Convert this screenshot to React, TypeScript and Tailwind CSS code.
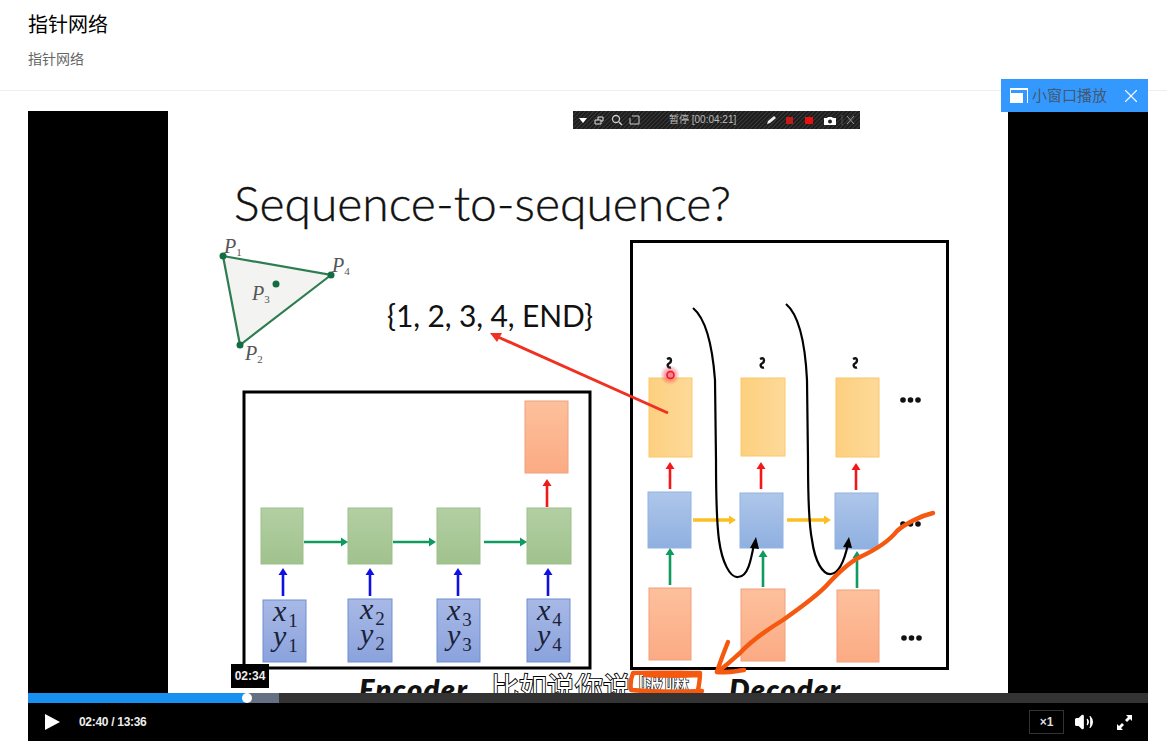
import { Volume2, X } from 'lucide-react';

const CJK = "'Liberation Sans', 'Noto Sans CJK SC', sans-serif";
const SLIDE = "Lato, 'Open Sans', sans-serif";

type Box = [number, number, number, number];

const greens: Box[] = [[261, 508, 42, 56], [348, 508, 44, 56], [437, 508, 43, 56], [527, 508, 44, 56]];
const inputs: Box[] = [[263, 600, 43, 62], [348, 599, 44, 63], [437, 599, 43, 63], [527, 599, 43, 63]];
const yellows: Box[] = [[649, 378, 43, 79], [741, 378, 44, 78], [836, 378, 43, 79]];
const blues: Box[] = [[648, 492, 43, 56], [740, 493, 43, 55], [835, 493, 43, 56]];
const oranges: Box[] = [[525, 401, 43, 72], [649, 588, 42, 72], [741, 589, 44, 72], [837, 590, 42, 72]];

// x1, y1, x2, y2, colour, stroke
const arrows: [number, number, number, number, string, number][] = [
  [283, 596, 283, 568, '#1010e0', 2.6],
  [370, 596, 370, 568, '#1010e0', 2.6],
  [458, 596, 458, 568, '#1010e0', 2.6],
  [548, 596, 548, 568, '#1010e0', 2.6],
  [304, 542, 348, 542, '#109a60', 2.6],
  [393, 542, 436, 542, '#109a60', 2.6],
  [484, 542, 527, 542, '#109a60', 2.6],
  [547, 507, 547, 479, '#f01818', 2.6],
  [670, 489, 670, 462, '#f01818', 2.6],
  [761, 489, 761, 462, '#f01818', 2.6],
  [856, 490, 856, 463, '#f01818', 2.6],
  [693, 520, 736, 520, '#fbbf24', 3.4],
  [787, 520, 831, 520, '#fbbf24', 3.4],
  [670, 585, 670, 548, '#109a60', 2.6],
  [763, 587, 763, 550, '#109a60', 2.6],
  [857, 588, 857, 551, '#109a60', 2.6],
];

function Boxes({ items, fill, stroke }: { items: Box[]; fill: string; stroke: string }) {
  return (
    <>
      {items.map(([x, y, w, h]) => (
        <rect key={`${x}-${y}`} x={x} y={y} width={w} height={h} fill={fill} stroke={stroke} strokeWidth="1" />
      ))}
    </>
  );
}

function Arrow({ x1, y1, x2, y2, color, width }: { x1: number; y1: number; x2: number; y2: number; color: string; width: number }) {
  const len = Math.hypot(x2 - x1, y2 - y1);
  const ux = (x2 - x1) / len;
  const uy = (y2 - y1) / len;
  const bx = x2 - ux * 7;
  const by = y2 - uy * 7;
  return (
    <g>
      <line x1={x1} y1={y1} x2={bx} y2={by} stroke={color} strokeWidth={width} />
      <polygon points={`${x2},${y2} ${bx - uy * 4.5},${by + ux * 4.5} ${bx + uy * 4.5},${by - ux * 4.5}`} fill={color} />
    </g>
  );
}

function Dots({ x, y }: { x: number; y: number }) {
  return (
    <>
      <circle cx={x} cy={y} r="2.8" fill="#111" />
      <circle cx={x + 7.5} cy={y} r="2.8" fill="#111" />
      <circle cx={x + 15} cy={y} r="2.8" fill="#111" />
    </>
  );
}

function Squiggle({ x }: { x: number }) {
  return (
    <path
      d={`M${x - 2} 359 q4 -2 4 1.5 q0 2 -2 3 q-2 1 -1 3 q1 1.5 3 1`}
      fill="none"
      stroke="#111"
      strokeWidth="2.4"
    />
  );
}

function Vars({ x, n, top }: { x: number; n: number; top: number }) {
  return (
    <g fill="#1a2238" fontFamily="'Liberation Serif', serif" fontSize="30">
      <text x={x} y={top}>
        <tspan fontStyle="italic">x</tspan>
        <tspan dy="6" dx="2" fontSize="19">{n}</tspan>
      </text>
      <text x={x} y={top + 25}>
        <tspan fontStyle="italic">y</tspan>
        <tspan dy="6" dx="2" fontSize="19">{n}</tspan>
      </text>
    </g>
  );
}

function PLabel({ x, y, n }: { x: number; y: number; n: number }) {
  return (
    <text x={x} y={y} fill="#555" fontFamily="'Liberation Serif', serif" fontSize="20">
      <tspan fontStyle="italic">P</tspan>
      <tspan dy="3" fontSize="11">{n}</tspan>
    </text>
  );
}

function Slide() {
  return (
    <svg className="block w-[840px] h-[582px] bg-white" viewBox="168 111 840 582">
      <defs>
        <pattern id="hatch" width="3" height="3" patternUnits="userSpaceOnUse" patternTransform="rotate(45)">
          <rect width="3" height="3" fill="#1c1c1c" />
          <rect width="1" height="3" fill="#3a3a3a" />
        </pattern>
        <linearGradient id="yellowFill" x1="0" x2="1" y1="0" y2="0">
          <stop offset="0" stopColor="#fdd07f" />
          <stop offset="1" stopColor="#fdd999" />
        </linearGradient>
        <linearGradient id="blueFill" x1="0" x2="0" y1="0" y2="1">
          <stop offset="0" stopColor="#aec6ea" />
          <stop offset="1" stopColor="#8fb0e0" />
        </linearGradient>
        <linearGradient id="orangeFill" x1="0" x2="0" y1="0" y2="1">
          <stop offset="0" stopColor="#fdc09c" />
          <stop offset="1" stopColor="#fbab84" />
        </linearGradient>
        <linearGradient id="greenFill" x1="0" x2="0" y1="0" y2="1">
          <stop offset="0" stopColor="#b3cfa3" />
          <stop offset="1" stopColor="#a0c28d" />
        </linearGradient>
        <linearGradient id="inputFill" x1="0" x2="0" y1="0" y2="1">
          <stop offset="0" stopColor="#a8b9e6" />
          <stop offset="1" stopColor="#8aa2dc" />
        </linearGradient>
        <radialGradient id="glow">
          <stop offset="0.3" stopColor="#f04050" stopOpacity="0.65" />
          <stop offset="1" stopColor="#f04050" stopOpacity="0" />
        </radialGradient>
      </defs>

      {/* screen recorder toolbar */}
      <rect x="573" y="111" width="287" height="18" fill="url(#hatch)" />
      <polygon points="579,118 587,118 583,123" fill="#fff" />
      <path d="M595 120h6v4h-6z M598 120v-3h5v4h-2" fill="none" stroke="#ddd" strokeWidth="1" />
      <circle cx="616" cy="119" r="3.5" fill="none" stroke="#ccc" strokeWidth="1.3" />
      <line x1="619" y1="122" x2="622" y2="125" stroke="#ccc" strokeWidth="1.5" />
      <path d="M630 118v6h9v-8h-7" fill="none" stroke="#ccc" strokeWidth="1" />
      <text x="669" y="123" fontSize="10" fill="#bbb" fontFamily={CJK}>暂停 [00:04:21]</text>
      <path d="M767 124l1-3 6-5 2 2-6 5z" fill="#eee" />
      <rect x="786" y="117" width="7" height="7" fill="#c81818" />
      <rect x="805" y="117" width="8" height="7" fill="#e81010" />
      <path d="M824 118h3l1-1h4l1 1h3v7h-12z" fill="#fff" />
      <circle cx="830" cy="121.5" r="2" fill="#222" />
      <line x1="842" y1="115" x2="842" y2="125" stroke="#555" />
      <path d="M847 116l7 8M854 116l-7 8" stroke="#999" strokeWidth="1" />

      {/* title */}
      <text
        x="234"
        y="221"
        fontSize="48"
        fontWeight="300"
        fill="#111"
        stroke="#111"
        strokeWidth="0.4"
        fontFamily={SLIDE}
        textLength="497"
      >
        Sequence-to-sequence?
      </text>

      {/* point triangle */}
      <polygon points="223,256 331,275 240,345" fill="#f3f4f1" stroke="#2e7d50" strokeWidth="2.2" />
      <circle cx="223" cy="256" r="3.5" fill="#146c43" />
      <circle cx="331" cy="275" r="3.5" fill="#146c43" />
      <circle cx="240" cy="345" r="3.5" fill="#146c43" />
      <circle cx="276" cy="284" r="3.5" fill="#146c43" />
      <PLabel x={224} y={253} n={1} />
      <PLabel x={332} y={272} n={4} />
      <PLabel x={252} y={300} n={3} />
      <PLabel x={245} y={360} n={2} />

      <text x="387" y="327" fontSize="30" fill="#111" fontFamily={SLIDE} textLength="206">
        {'{1, 2, 3, 4, END}'}
      </text>

      {/* encoder */}
      <rect x="244" y="392" width="346" height="276" fill="#fff" stroke="#000" strokeWidth="3" />
      <Boxes items={greens} fill="url(#greenFill)" stroke="#9dbf8b" />
      <Boxes items={inputs} fill="url(#inputFill)" stroke="#6f8fd0" />
      <Vars x={273} n={1} top={621} />
      <Vars x={360} n={2} top={619} />
      <Vars x={447} n={3} top={620} />
      <Vars x={537} n={4} top={620} />

      {/* decoder */}
      <rect x="631.5" y="241.5" width="316" height="427" fill="#fff" stroke="#000" strokeWidth="3" />
      <Boxes items={yellows} fill="url(#yellowFill)" stroke="#fbc868" />
      <Boxes items={blues} fill="url(#blueFill)" stroke="#8fb4e4" />
      <Boxes items={oranges} fill="url(#orangeFill)" stroke="#f0a07c" />
      <Squiggle x={669} />
      <Squiggle x={762} />
      <Squiggle x={855} />
      <Dots x={903} y={400} />
      <Dots x={903} y={524} />
      <Dots x={904} y={638} />

      {arrows.map(([x1, y1, x2, y2, color, width]) => (
        <Arrow key={`${x1}-${y1}-${x2}`} x1={x1} y1={y1} x2={x2} y2={y2} color={color} width={width} />
      ))}

      {/* black curves */}
      <path
        d="M693 308C705 318 712 340 715 380L716 460C716 500 717 525 719 540C722 562 730 578 738 577C748 577 751 560 754 544"
        fill="none"
        stroke="#000"
        strokeWidth="2.2"
      />
      <polygon points="756,537 750,548 759,549" fill="#000" />
      <path
        d="M786 304C798 314 805 340 807 380L808 460C808 500 809 525 812 540C815 562 823 575 831 574C840 573 845 558 848 544"
        fill="none"
        stroke="#000"
        strokeWidth="2.2"
      />
      <polygon points="849,537 843,547 852,548" fill="#000" />

      {/* pointer arrow */}
      <line x1="668" y1="413" x2="498" y2="337" stroke="#f03020" strokeWidth="3" />
      <polygon points="490,333 502,333 497,342" fill="#f03020" />
      <circle cx="670" cy="375" r="10" fill="url(#glow)" />
      <circle cx="670.5" cy="375" r="3.5" fill="none" stroke="#f01828" strokeWidth="1.6" />

      {/* captions */}
      <text x="359" y="700" fontSize="29" fontWeight="800" fontStyle="italic" fill="#111" fontFamily={SLIDE} textLength="108">
        Encoder
      </text>
      <text x="729" y="700" fontSize="29" fontWeight="800" fontStyle="italic" fill="#111" fontFamily={SLIDE} textLength="111">
        Decoder
      </text>
      <text
        x="491"
        y="698"
        fontSize="28"
        fill="#fff"
        stroke="#000"
        strokeWidth="1.8"
        paintOrder="stroke"
        fontFamily="'Noto Sans CJK SC', sans-serif"
      >
        比如说你说
      </text>
      <text
        x="638"
        y="694"
        fontSize="26"
        fill="#fff"
        stroke="#222"
        strokeWidth="1.4"
        paintOrder="stroke"
        fontFamily="'Noto Sans CJK SC', sans-serif"
      >
        啵嘛
      </text>

      {/* hand drawn annotation */}
      <g fill="none" stroke="#f4590f" strokeWidth="4.4" strokeLinecap="round" strokeLinejoin="round">
        <path d="M933 513C920 516 905 524 897 531C890 540 875 550 860 557C850 562 838 573 827 585C818 595 800 608 783 620C770 628 752 640 740 653C732 660 725 667 717 672" />
        <path d="M728 642C724 652 720 662 717 672C727 673 736 671 744 670" />
        <path d="M700 673C680 673 655 672 633 673C631 678 630 684 631 690C655 692 680 692 702 691M700 673C700 680 699 685 698 690M645 675C665 676 685 676 698 675" />
      </g>
    </svg>
  );
}

export default function App() {
  return (
    <div className="relative min-h-screen bg-white" style={{ fontFamily: CJK }}>
      <header className="h-[91px] border-b border-[#eeeeee] px-7 pt-[12px]">
        <h1 className="text-[20px] leading-[26px] text-black">指针网络</h1>
        <p className="mt-[11px] text-[14px] leading-[20px] text-[#666666]">指针网络</p>
      </header>

      <div className="absolute left-[1001px] top-[79px] z-10 flex h-[33px] w-[147px] items-center bg-[#3399ff] pl-[9px]">
        <span className="relative block h-[15px] w-[18px] border-t-2 border-r border-l border-white">
          <span className="absolute bottom-0 left-[-1px] h-[10px] w-[13px] bg-white" />
        </span>
        <span className="ml-[4px] pt-[2px] text-[15px] text-[#44586e]">小窗口播放</span>
        <X className="ml-[13px] h-[22px] w-[22px] text-white" strokeWidth={1.2} />
      </div>

      <main className="px-7 pt-5">
        <div className="flex h-[630px] w-[1120px] flex-col bg-black">
          <div className="flex h-[582px] justify-center">
            <Slide />
          </div>

          <div className="relative h-[10px] bg-[#333333]">
            <div className="absolute left-0 top-0 h-full w-[251px] bg-[#667085]" />
            <div className="absolute left-0 top-0 h-full w-[219px] bg-[#1890f0]" />
            <div className="absolute left-[214px] top-0 h-[10px] w-[10px] rounded-full bg-white" />
            <div className="absolute left-[203px] top-[-29px] flex h-[24px] w-[38px] items-center justify-center bg-black text-[12px] font-bold text-[#eeeeee]">
              02:34
            </div>
          </div>

          <div className="flex h-[38px] items-center text-white">
            <svg className="ml-[17px] h-[16px] w-[15px]" viewBox="0 0 15 16" fill="#fff">
              <polygon points="0,0 15,8 0,16" />
            </svg>
            <span className="ml-[19px] text-[12px] font-bold tracking-[-0.3px] text-[#eeeeee]">02:40 / 13:36</span>
            <div className="ml-auto flex h-[24px] w-[35px] items-center justify-center border border-[#333333] text-[12px] font-bold text-[#dddddd]">
              ×1
            </div>
            <Volume2 className="ml-[10px] h-[20px] w-[20px] fill-white" strokeWidth={1.6} />
            <svg className="ml-[22px] mr-[15px] h-[17px] w-[17px]" viewBox="0 0 17 17" fill="#fff">
              <path d="M10 1h6v6l-2-2-3 3-2-2 3-3zM1 16v-6l2 2 3-3 2 2-3 3 2 2z" />
            </svg>
          </div>
        </div>
      </main>
    </div>
  );
}
